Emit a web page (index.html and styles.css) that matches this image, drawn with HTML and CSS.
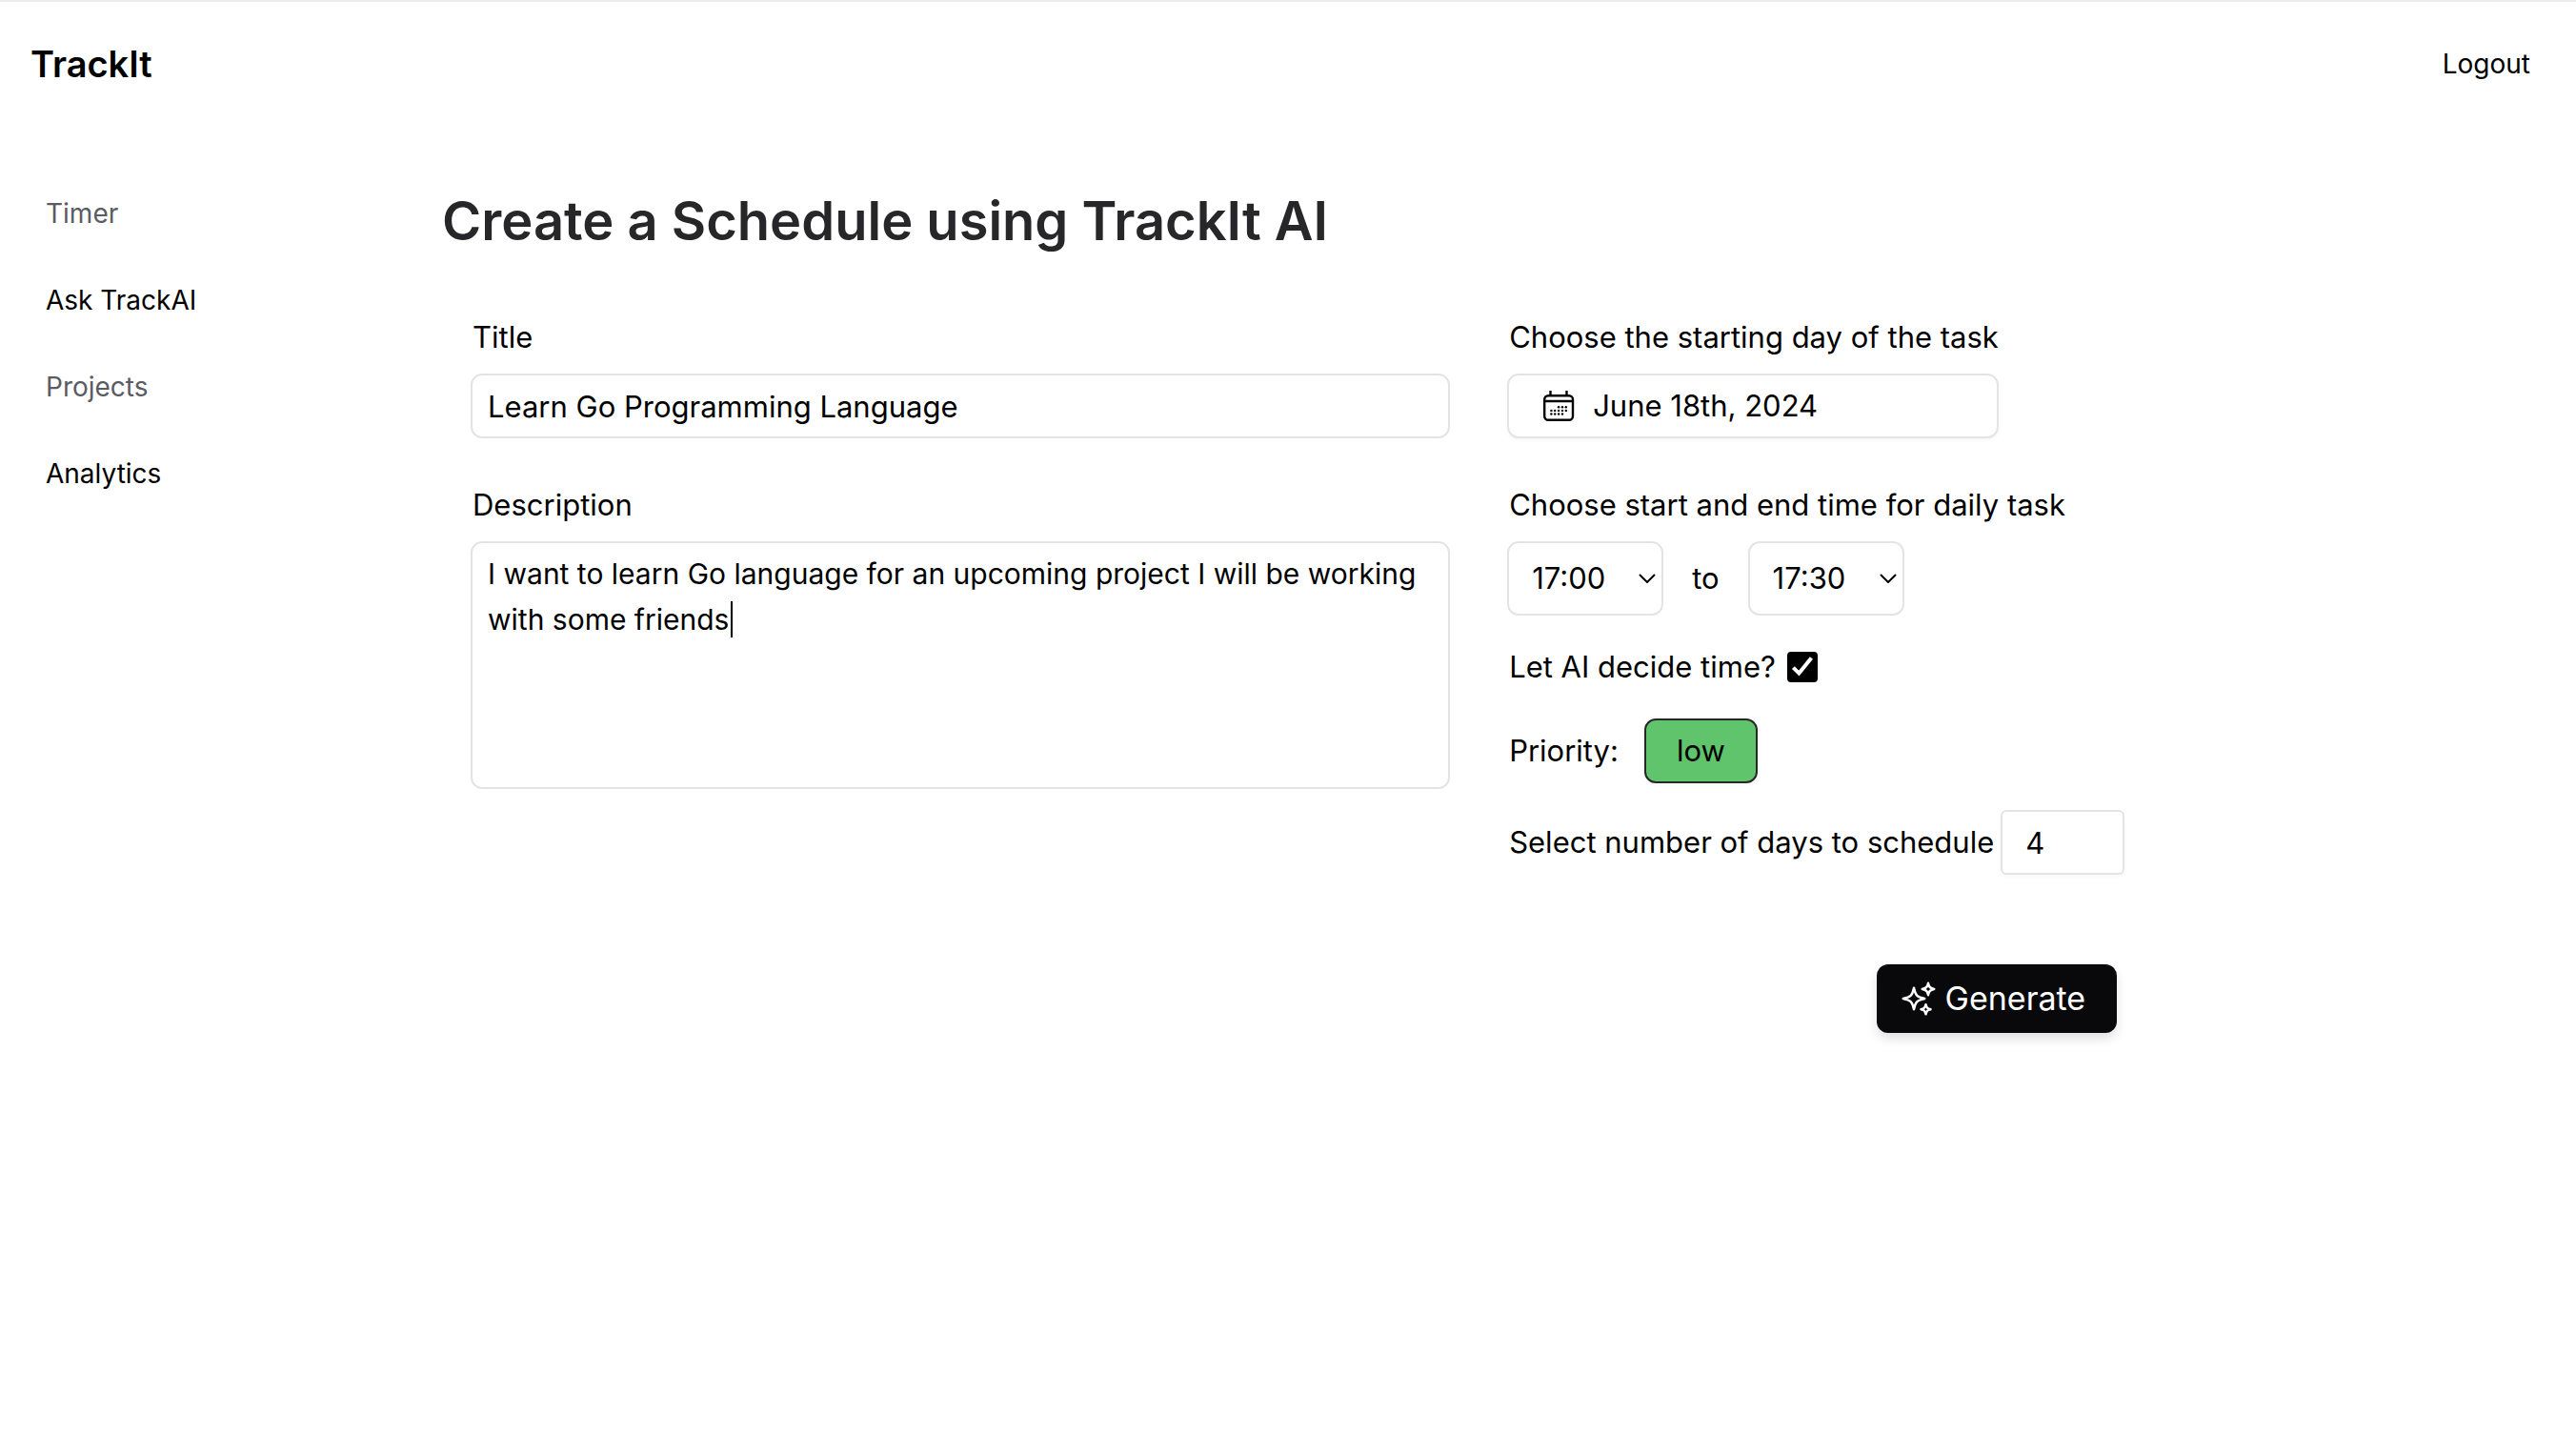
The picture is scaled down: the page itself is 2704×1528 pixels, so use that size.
FILE: index.html
```html
<!DOCTYPE html>
<html lang="en">
<head>
  <meta charset="utf-8">
  <meta name="viewport" content="width=device-width, initial-scale=1">
  <title>TrackIt</title>
  <link rel="stylesheet" href="styles.css">
</head>
<body>
  <header class="topbar">
    <a class="brand" href="#">TrackIt</a>
    <button class="logout" type="button">Logout</button>
  </header>
  <div class="shell">
    <nav class="sidebar">
      <a class="nav-link muted" href="#">Timer</a>
      <a class="nav-link" href="#">Ask TrackAI</a>
      <a class="nav-link muted" href="#">Projects</a>
      <a class="nav-link" href="#">Analytics</a>
    </nav>
    <main class="content">
      <h1 class="heading">Create a Schedule using TrackIt AI</h1>
      <form class="form">
        <div class="column">
          <div class="field">
            <label class="label" for="title">Title</label>
            <input class="box text-input" id="title" type="text" value="Learn Go Programming Language">
          </div>
          <div class="field">
            <label class="label" for="description">Description</label>
            <div class="textarea-wrap">
              <textarea class="box textarea" id="description">I want to learn Go language for an upcoming project I will be working with some friends</textarea>
              <span class="caret"></span>
            </div>
          </div>
        </div>
        <div class="column options">
          <div class="field">
            <label class="label" for="day">Choose the starting day of the task</label>
            <button class="box date-button" id="day" type="button">
              <svg class="date-icon" viewBox="0 0 36 36" aria-hidden="true">
                <path d="M9.5 2v4M26.5 2v4M3 13h30" fill="none" stroke="currentColor" stroke-width="2.4"/>
                <rect x="3.2" y="7.2" width="29.8" height="25.6" rx="4" fill="none" stroke="currentColor" stroke-width="2.4"/>
                <circle cx="18.1" cy="19.3" r="1.2"/><circle cx="22" cy="19.3" r="1.2"/><circle cx="25.8" cy="19.3" r="1.2"/>
                <circle cx="10.4" cy="22.9" r="1.2"/><circle cx="14.2" cy="22.9" r="1.2"/><circle cx="18.1" cy="22.9" r="1.2"/><circle cx="22" cy="22.9" r="1.2"/><circle cx="25.8" cy="22.9" r="1.2"/>
                <circle cx="10.4" cy="26.5" r="1.2"/><circle cx="14.2" cy="26.5" r="1.2"/><circle cx="18.1" cy="26.5" r="1.2"/><circle cx="22" cy="26.5" r="1.2"/>
              </svg>
              June 18th, 2024
            </button>
          </div>
          <div class="field">
            <label class="label" for="start">Choose start and end time for daily task</label>
            <div class="times">
              <div class="select-wrap">
                <select class="box select" id="start"><option>17:00</option></select>
                <svg class="chevron" viewBox="0 0 18 10" aria-hidden="true"><path d="M1 1l8 8 8-8"/></svg>
              </div>
              <label for="end">to</label>
              <div class="select-wrap">
                <select class="box select" id="end"><option>17:30</option></select>
                <svg class="chevron" viewBox="0 0 18 10" aria-hidden="true"><path d="M1 1l8 8 8-8"/></svg>
              </div>
            </div>
          </div>
          <div class="row ai-row">
            <label for="ai">Let AI decide time?</label>
            <span class="check-wrap">
              <input class="check" id="ai" type="checkbox" checked>
              <svg class="tick" viewBox="0 0 32 32" aria-hidden="true"><path d="M6.4 16.6l6 6L25.4 6.4"/></svg>
            </span>
          </div>
          <div class="row priority-row">
            <span>Priority:</span>
            <button class="priority" type="button">low</button>
          </div>
          <div class="row days-row">
            <label for="days">Select number of days to schedule</label>
            <input class="box days" id="days" type="text" inputmode="numeric" value="4">
          </div>
          <button class="generate" type="submit">
            <svg class="spark" viewBox="0 0 24 24" aria-hidden="true"><path d="M9.813 15.904 9 18.75l-.813-2.846a4.5 4.5 0 0 0-3.09-3.09L2.25 12l2.846-.813a4.5 4.5 0 0 0 3.09-3.09L9 5.25l.813 2.846a4.5 4.5 0 0 0 3.09 3.09L15.75 12l-2.846.813a4.5 4.5 0 0 0-3.09 3.09ZM18.259 8.715 18 9.75l-.259-1.035a3.375 3.375 0 0 0-2.455-2.456L14.25 6l1.036-.259a3.375 3.375 0 0 0 2.455-2.456L18 2.25l.259 1.035a3.375 3.375 0 0 0 2.456 2.456L21.75 6l-1.035.259a3.375 3.375 0 0 0-2.456 2.456ZM16.894 20.567 16.5 21.75l-.394-1.183a2.25 2.25 0 0 0-1.423-1.423L13.5 18.75l1.183-.394a2.25 2.25 0 0 0 1.423-1.423l.394-1.183.394 1.183a2.25 2.25 0 0 0 1.423 1.423l1.183.394-1.183.394a2.25 2.25 0 0 0-1.423 1.423Z"/></svg>
            Generate
          </button>
        </div>
      </form>
    </main>
  </div>
</body>
</html>
```
FILE: styles.css
```css
*, *::before, *::after { box-sizing: border-box; }

body {
  margin: 0;
  background: #fff;
  color: #000;
  font: 400 31px/48px Inter, "Liberation Sans", sans-serif;
}

button, input, textarea, select {
  margin: 0;
  color: inherit;
  font: inherit;
}

a { color: inherit; text-decoration: none; }

.topbar {
  display: flex;
  align-items: center;
  justify-content: space-between;
  height: 132px;
  padding: 0 48px 0 32px;
  border-top: 2px solid #ececf1;
}

.brand { font-size: 38px; font-weight: 600; }

.logout {
  padding: 0;
  border: 0;
  background: none;
  font-size: 28px;
}

.shell {
  display: grid;
  grid-template-columns: 464px minmax(0, 1fr);
}

.sidebar {
  display: flex;
  flex-direction: column;
  gap: 43px;
  padding: 68px 48px;
}

.nav-link { font-size: 28px; }
.muted { color: #5b5b64; }

.content { padding: 64px 8px 64px 0; }

.heading {
  margin: 0;
  color: #27272a;
  font-size: 56px;
  font-weight: 600;
  line-height: 72px;
}

.form {
  display: grid;
  grid-template-columns: minmax(0, 12fr) minmax(0, 13fr);
  gap: 60px;
  padding: 62px 0 0 30px;
}

.column {
  display: flex;
  flex-direction: column;
  gap: 46px;
}

.options {
  gap: 0;
  max-width: 648px;
}

.options .field { margin-bottom: 46px; }
.options .field:nth-child(2) { margin-bottom: 30px; }

.field {
  display: flex;
  flex-direction: column;
  gap: 14px;
}

.label { padding-left: 2px; }

.box {
  display: block;
  border: 2px solid #e4e4e7;
  border-radius: 12px;
  background: #fff;
  outline: 0;
}

.text-input {
  width: 100%;
  height: 68px;
  padding: 0 16px;
}

.textarea-wrap { position: relative; }

.textarea {
  width: 100%;
  height: 260px;
  padding: 8px 16px;
  overflow: hidden;
  font-size: 30px;
  resize: none;
}

/* text cursor at the end of the description */
.caret {
  position: absolute;
  top: 63px;
  left: 273px;
  width: 2px;
  height: 38px;
  background: #000;
}

.date-button {
  display: flex;
  align-items: center;
  gap: 18px;
  width: 516px;
  height: 68px;
  padding: 0 34px;
  box-shadow: 0 2px 4px rgb(0 0 0 / 3%);
}

.date-icon {
  width: 36px;
  height: 36px;
  fill: currentColor;
}

.times {
  display: flex;
  align-items: center;
  gap: 30px;
}

.select-wrap { position: relative; }

.select {
  width: 164px;
  height: 78px;
  padding: 0 24px;
  appearance: none;
}

.chevron {
  position: absolute;
  top: 34px;
  right: 8px;
  width: 18px;
  height: 10px;
  fill: none;
  stroke: #000;
  stroke-width: 2;
  pointer-events: none;
}

.row {
  display: flex;
  align-items: center;
  padding-left: 2px;
}

.ai-row { gap: 12px; }

.check-wrap {
  display: grid;
  width: 32px;
  height: 32px;
}

.check, .tick {
  grid-area: 1 / 1;
  width: 32px;
  height: 32px;
}

.check {
  border-radius: 4px;
  background: #000;
  appearance: none;
}

.tick {
  fill: none;
  stroke: #fff;
  stroke-width: 4;
  pointer-events: none;
}

.priority-row {
  gap: 27px;
  margin-top: 30px;
}

.priority {
  height: 68px;
  padding: 0 32px;
  border: 2px solid #27272a;
  border-radius: 12px;
  background: #5fc46b;
  box-shadow: 0 2px 4px rgb(0 0 0 / 3%);
}

.days-row {
  justify-content: space-between;
  margin-top: 28px;
}

.days {
  width: 130px;
  height: 68px;
  padding: 0 24px;
  border-radius: 6px;
  box-shadow: 0 2px 4px rgb(0 0 0 / 3%);
}

.generate {
  display: flex;
  align-items: center;
  align-self: flex-end;
  gap: 8px;
  height: 72px;
  margin: 94px 8px 0 0;
  padding: 0 33px 0 24px;
  border: 0;
  border-radius: 12px;
  background: #09090b;
  box-shadow: 0 6px 12px rgb(0 0 0 / 12%);
  color: #fff;
  font-size: 34px;
}

.spark {
  width: 40px;
  height: 40px;
  fill: none;
  stroke: currentColor;
  stroke-width: 1.5;
  stroke-linecap: round;
  stroke-linejoin: round;
}
```
